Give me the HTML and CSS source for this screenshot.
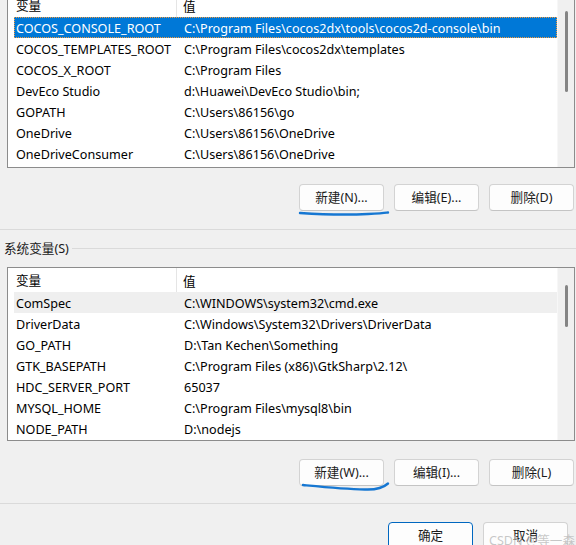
FILE: index.html
```html
<!DOCTYPE html>
<html lang="zh-CN">
<head>
<meta charset="utf-8">
<title>环境变量</title>
<link rel="stylesheet" href="styles.css">
</head>
<body>
<div class="dialog">
  <div class="listbox listbox-user">
    <div class="list-main">
      <div class="lv-header"><span class="c1">变量</span><span class="c2">值</span></div>
      <div class="lv-row selected"><span class="c1">COCOS_CONSOLE_ROOT</span><span class="c2">C:\Program Files\cocos2dx\tools\cocos2d-console\bin</span></div>
      <div class="lv-row"><span class="c1">COCOS_TEMPLATES_ROOT</span><span class="c2">C:\Program Files\cocos2dx\templates</span></div>
      <div class="lv-row"><span class="c1">COCOS_X_ROOT</span><span class="c2">C:\Program Files</span></div>
      <div class="lv-row"><span class="c1">DevEco Studio</span><span class="c2">d:\Huawei\DevEco Studio\bin;</span></div>
      <div class="lv-row"><span class="c1">GOPATH</span><span class="c2">C:\Users\86156\go</span></div>
      <div class="lv-row"><span class="c1">OneDrive</span><span class="c2">C:\Users\86156\OneDrive</span></div>
      <div class="lv-row"><span class="c1">OneDriveConsumer</span><span class="c2">C:\Users\86156\OneDrive</span></div>
    </div>
    <div class="scrollbar"><div class="thumb thumb-user"></div></div>
  </div>

  <div class="btn-row btn-row-user">
    <button class="btn">新建(N)...</button>
    <button class="btn">编辑(E)...</button>
    <button class="btn">删除(D)</button>
    <svg class="scribble scribble-1" width="96" height="10" viewBox="0 0 96 10"><path d="M2 5 C 25 6.5, 50 7, 70 6 S 88 4.5, 90 4.5" fill="none" stroke="#1677d2" stroke-width="2.4" stroke-linecap="round"/></svg>
  </div>

  <div class="separator sep-top"></div>

  <div class="group-title"><span class="group-label">系统变量(S)</span><span class="group-line"></span></div>

  <div class="listbox listbox-sys">
    <div class="list-main">
      <div class="lv-header"><span class="c1">变量</span><span class="c2">值</span></div>
      <div class="lv-row hover"><span class="c1">ComSpec</span><span class="c2">C:\WINDOWS\system32\cmd.exe</span></div>
      <div class="lv-row"><span class="c1">DriverData</span><span class="c2">C:\Windows\System32\Drivers\DriverData</span></div>
      <div class="lv-row"><span class="c1">GO_PATH</span><span class="c2">D:\Tan Kechen\Something</span></div>
      <div class="lv-row"><span class="c1">GTK_BASEPATH</span><span class="c2">C:\Program Files (x86)\GtkSharp\2.12\</span></div>
      <div class="lv-row"><span class="c1">HDC_SERVER_PORT</span><span class="c2">65037</span></div>
      <div class="lv-row"><span class="c1">MYSQL_HOME</span><span class="c2">C:\Program Files\mysql8\bin</span></div>
      <div class="lv-row"><span class="c1">NODE_PATH</span><span class="c2">D:\nodejs</span></div>
    </div>
    <div class="scrollbar"><div class="thumb thumb-sys"></div></div>
  </div>

  <div class="btn-row btn-row-sys">
    <button class="btn">新建(W)...</button>
    <button class="btn">编辑(I)...</button>
    <button class="btn">删除(L)</button>
    <svg class="scribble scribble-2" width="96" height="14" viewBox="0 0 96 14"><path d="M4 4 C 25 6, 45 8, 66 8.5 C 78 9, 84 7, 89 2.5" fill="none" stroke="#1677d2" stroke-width="2.4" stroke-linecap="round"/></svg>
  </div>

  <div class="separator sep-bottom"></div>

  <div class="btn-row btn-row-main">
    <button class="btn btn-default">确定</button>
    <button class="btn">取消</button>
    <span class="watermark">CSDN @等一森</span>
  </div>
</div>
</body>
</html>
```

FILE: styles.css
```css
html, body {
  margin: 0;
  padding: 0;
  background: #f0f0f0;
  overflow: hidden;
}

body {
  font-family: "Noto Sans", "Noto Sans CJK SC", sans-serif;
  font-size: 12.6px;
  color: #000;
  width: 576px;
  height: 545px;
}

.dialog {
  display: flex;
  flex-direction: column;
}

.listbox {
  box-sizing: border-box;
  width: 568px;
  margin-left: 7px;
  border: 1px solid #8c8c8c;
  background: #fff;
  display: flex;
}

.listbox-user {
  margin-top: -8px;
  height: 176px;
}

.listbox-sys {
  margin-top: 11px;
  height: 174px;
}

.list-main {
  flex: 1;
  display: flex;
  flex-direction: column;
  min-width: 0;
}

.lv-header {
  box-sizing: border-box;
  height: 24px;
  display: flex;
  align-items: center;
  padding-left: 6px;
}

.lv-header .c1 {
  box-sizing: border-box;
  width: 163px;
  padding-left: 2px;
  padding-top: 1px;
  height: 24px;
  line-height: 23px;
  border-right: 1px solid #e5e5e5;
}

.lv-header .c2 {
  padding-left: 6px;
  padding-top: 1px;
}

.lv-row {
  box-sizing: border-box;
  height: 21px;
  margin-left: 6px;
  padding-top: 1px;
  display: flex;
  align-items: center;
  white-space: nowrap;
  border: 1px solid transparent;
}

.lv-row .c1 {
  width: 167px;
  padding-left: 1px;
  flex: none;
}

.lv-row .c2 {
  padding-left: 1px;
}

.lv-row.selected {
  background: #0078d7;
  color: #fff;
  border: 1px dotted #f39a3c;
}

.lv-row.hover {
  background: #efefef;
}

.scrollbar {
  width: 17px;
  flex: none;
  background: #f0f0f0;
  border-left: 1px solid #f7f7f7;
  box-sizing: border-box;
  display: flex;
  justify-content: center;
}

.thumb {
  width: 3px;
  border-radius: 2px;
  background: #858585;
}

.thumb-user {
  margin-top: 18px;
  height: 81px;
}

.thumb-sys {
  margin-top: 17px;
  height: 42px;
}

.btn-row {
  position: relative;
  display: flex;
  justify-content: flex-end;
  gap: 10px;
  padding-right: 2px;
}

.btn-row-user {
  margin-top: 16px;
}

.btn-row-sys {
  margin-top: 18px;
}

.btn-row-main {
  margin-top: 18px;
  padding-right: 8px;
}

.btn {
  box-sizing: border-box;
  width: 85px;
  height: 27px;
  border: 1px solid #d3d3d3;
  border-bottom-color: #c4c4c4;
  border-radius: 4px;
  background: #fdfdfd;
  font-family: "Noto Sans", "Noto Sans CJK SC", sans-serif;
  font-size: 12.6px;
  color: #1a1a1a;
  padding: 1px 0 0;
  line-height: 24px;
}

.btn-default {
  border: 1px solid #0067c0;
}

.separator {
  height: 1px;
  background: #dadada;
}

.sep-top {
  margin-top: 18px;
}

.sep-bottom {
  margin-top: 17px;
}

.group-title {
  margin-top: 8px;
  height: 18px;
  display: flex;
  align-items: center;
  padding-left: 4px;
}

.group-label {
  color: #1a1a1a;
  padding-right: 3px;
  padding-top: 1px;
}

.group-line {
  flex: 1;
  height: 1px;
  background: #dadada;
  margin-top: 2px;
}

.scribble {
  position: absolute;
  pointer-events: none;
}

.scribble-1 {
  left: 298px;
  top: 24px;
}

.scribble-2 {
  left: 299px;
  top: 22px;
}

.watermark {
  position: absolute;
  left: 489px;
  top: 5px;
  color: rgba(190, 190, 190, 0.85);
  font-size: 12.6px;
  line-height: 27px;
  pointer-events: none;
}
```
